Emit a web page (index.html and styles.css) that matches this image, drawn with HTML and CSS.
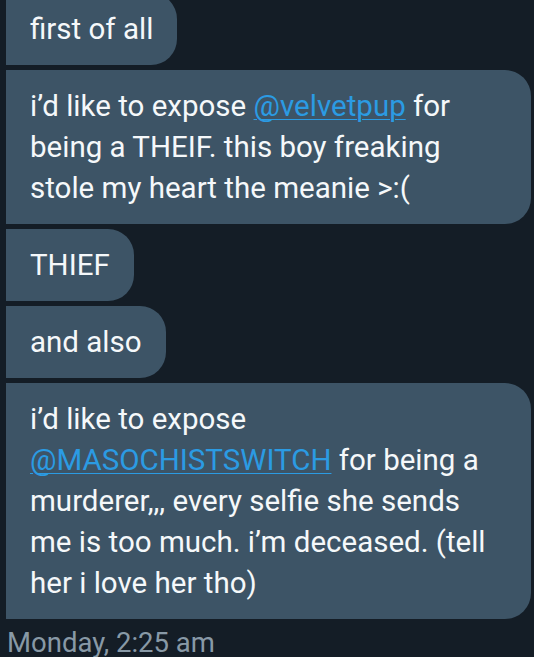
FILE: index.html
```html
<!DOCTYPE html>
<html lang="en">

<head>
    <meta charset="UTF-8">
    <meta name="viewport" content="width=device-width, initial-scale=1.0">
    <title>Messages</title>
    <link rel="stylesheet" href="styles.css">
</head>
<body>
    <div class="conversation">
        <div class="message-group">
            <div class="bubble">first of all</div>
            <div class="bubble">i’d like to expose <a href="#">@velvetpup</a> for being a THEIF. this boy freaking stole my heart the meanie &gt;:(</div>
            <div class="bubble">THIEF</div>
            <div class="bubble">and also</div>
            <div class="bubble">i’d like to expose <a href="#">@MASOCHISTSWITCH</a> for being a murderer,,, every selfie she sends me is too much. i’m deceased. (tell her i love her tho)</div>
        </div>
        <p class="timestamp">Monday, 2:25 am</p>
    </div>
</body>

</html>
```

FILE: styles.css
```css
body {
    font-family: Roboto, "Noto Sans", sans-serif;
    margin: 0;
    padding: 0;
    background-color: #141d26;
    color: #f5f8fa;
    overflow: hidden;
}

.conversation {
    margin-top: -7px;
    padding: 0 3px 0 6px;
}

.message-group {
    display: flex;
    flex-direction: column;
    align-items: flex-start;
    gap: 5px;
}

.bubble {
    background-color: #3d5466;
    font-size: 29.5px;
    line-height: 41px;
    padding: 15.5px 24px;
    border-radius: 0 26px 26px 0;
    max-width: 477px;
}

.bubble a {
    color: #2b9be3;
    text-decoration: underline;
    text-underline-offset: 3px;
    text-decoration-thickness: 1px;
}

.timestamp {
    margin: 7px 0 0 1px;
    font-size: 27.5px;
    line-height: 34px;
    color: #8899a6;
}
```
